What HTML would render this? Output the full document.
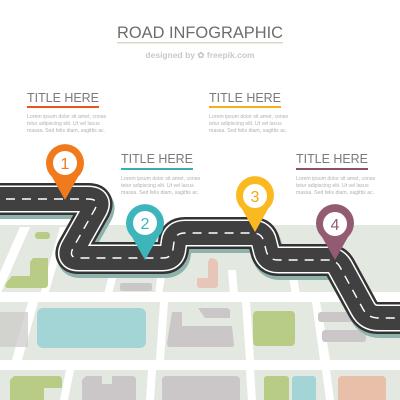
<!DOCTYPE html>
<html><head><meta charset="utf-8"><style>
html,body{margin:0;padding:0;background:#fff;}
svg{display:block;}
text{font-family:"Liberation Sans",sans-serif;}
</style></head><body>
<svg width="400" height="400" viewBox="0 0 400 400" xmlns="http://www.w3.org/2000/svg">
<rect width="400" height="400" fill="#fff"/>
<g>
<rect x="0" y="225" width="400" height="70" fill="#e3e9e1"/>
<rect x="0" y="292" width="400" height="10" fill="#fff"/>
<path d="M20 227 L30 227 L0 295 L-10 295Z" fill="#fff"/>
<path d="M60 227 L68 227 L48 295 L40 295Z" fill="#fff"/>
<path d="M110 270 L118 270 L112 295 L104 295Z" fill="#fff"/>
<path d="M158 270 L166 270 L162 295 L155 295Z" fill="#fff"/>
<path d="M228 270 L236 270 L238 295 L230 295Z" fill="#fff"/>
<path d="M288 270 L296 270 L300 295 L292 295Z" fill="#fff"/>
<path d="M350 270 L358 270 L366 295 L358 295Z" fill="#fff"/>
<rect x="35" y="232" width="15" height="7" rx="3" fill="#b9cc86"/>
<path d="M33 258 L48 258 L48 284 Q48 288 44 288 L8 288 Q4 288 6 283 L12 276 L30 276 L30 262Z" fill="#b9cc86"/>
<rect x="120" y="283" width="32" height="8" rx="2" fill="#cbc7c8"/>
<path d="M210 258 Q218 258 218 264 L218 285 Q218 288 214 288 L200 288 Q197 288 197 284 L197 278 L208 278 L208 262Z" fill="#e8c5b9"/>
<rect x="0" y="302" width="400" height="58" fill="#e3e9e1"/>
<path d="M28 302 L38 302 L22 360 L12 360Z" fill="#fff"/>
<path d="M160 302 L168 302 L164 360 L156 360Z" fill="#fff"/>
<path d="M242 302 L250 302 L254 360 L246 360Z" fill="#fff"/>
<path d="M312 302 L320 302 L330 360 L320 360Z" fill="#fff"/>
<rect x="0" y="312" width="28" height="35" fill="#cbc7c8" opacity="0.7"/>
<rect x="37" y="308" width="109" height="40" rx="6" fill="#a3d5d7"/>
<path d="M172 312 L182 312 L182 326 L232 326 L234 345 Q234 347 231 347 L170 347 Q167 347 167 343Z" fill="#cbc7c8"/>
<path d="M198 308 L226 308 Q230 308 230 312 L230 318 L205 318Z" fill="#cbc7c8"/>
<rect x="253" y="311" width="42" height="35" rx="4" fill="#b9cc86"/>
<rect x="318" y="312" width="40" height="10" rx="3" fill="#cbc7c8"/>
<rect x="322" y="330" width="44" height="12" rx="3" fill="#cbc7c8"/>
<rect x="0" y="360" width="400" height="10" fill="#fff"/>
<rect x="0" y="370" width="400" height="30" fill="#e3e9e1"/>
<path d="M66 370 L74 370 L68 400 L60 400Z" fill="#fff"/>
<path d="M148 370 L156 370 L154 400 L146 400Z" fill="#fff"/>
<path d="M246 370 L254 370 L256 400 L248 400Z" fill="#fff"/>
<path d="M322 370 L330 370 L334 400 L326 400Z" fill="#fff"/>
<path d="M14 376 L58 376 Q62 376 62 380 L62 388 L44 388 L44 400 L10 400 L10 380Z" fill="#b9cc86"/>
<path d="M86 376 L102 376 L102 384 L112 384 L112 376 L132 376 Q136 376 136 380 L136 400 L82 400 L82 380Z" fill="#cbc7c8"/>
<rect x="162" y="376" width="78" height="30" rx="4" fill="#cbc7c8"/>
<rect x="264" y="376" width="25" height="30" rx="3" fill="#b9cc86"/>
<rect x="292" y="376" width="24" height="30" rx="3" fill="#a3d5d7"/>
<rect x="338" y="376" width="48" height="30" rx="4" fill="#e8bfa8"/>
</g>
<g fill="none" stroke-linejoin="round" stroke-linecap="butt">
<path d="M-10 199 L88 199 Q100 199 95 209 L73 248 Q68 258 79 258 L163 258 Q172 258 173 249 L174 242 Q175 233 185 233 L253 233 Q262 233 264 242 L266 250 Q268 260 278 260 L328 260 Q336 260 340 267 L363 309 Q368 318 378 318 L410 318" stroke="#8fb2ac" stroke-width="32" transform="translate(2,4)"/>
<path d="M-10 199 L88 199 Q100 199 95 209 L73 248 Q68 258 79 258 L163 258 Q172 258 173 249 L174 242 Q175 233 185 233 L253 233 Q262 233 264 242 L266 250 Q268 260 278 260 L328 260 Q336 260 340 267 L363 309 Q368 318 378 318 L410 318" stroke="#333" stroke-width="32"/>
<path d="M-10 199 L88 199 Q100 199 95 209 L73 248 Q68 258 79 258 L163 258 Q172 258 173 249 L174 242 Q175 233 185 233 L253 233 Q262 233 264 242 L266 250 Q268 260 278 260 L328 260 Q336 260 340 267 L363 309 Q368 318 378 318 L410 318" stroke="#fff" stroke-width="27"/>
<path d="M-10 199 L88 199 Q100 199 95 209 L73 248 Q68 258 79 258 L163 258 Q172 258 173 249 L174 242 Q175 233 185 233 L253 233 Q262 233 264 242 L266 250 Q268 260 278 260 L328 260 Q336 260 340 267 L363 309 Q368 318 378 318 L410 318" stroke="#404040" stroke-width="24"/>
<path d="M-10 199 L88 199 Q100 199 95 209 L73 248 Q68 258 79 258 L163 258 Q172 258 173 249 L174 242 Q175 233 185 233 L253 233 Q262 233 264 242 L266 250 Q268 260 278 260 L328 260 Q336 260 340 267 L363 309 Q368 318 378 318 L410 318" stroke="#fff" stroke-width="1.4" stroke-dasharray="9 7"/>
</g>
<g>
<path d="M65 200 L52 177 A19 19 0 1 1 78 177 Z" fill="#f07a1c"/>
<circle cx="65" cy="163" r="12" fill="#fff"/>
<text x="65" y="169" font-size="16" text-anchor="middle" fill="#f07a1c">1</text>
<path d="M145 260 L132 237 A19 19 0 1 1 158 237 Z" fill="#3db6bb"/>
<circle cx="145" cy="223" r="12" fill="#fff"/>
<text x="145" y="229" font-size="16" text-anchor="middle" fill="#3db6bb">2</text>
<path d="M255 232 L242 209 A19 19 0 1 1 268 209 Z" fill="#fbb921"/>
<circle cx="255" cy="196" r="12" fill="#fff"/>
<text x="255" y="202" font-size="16" text-anchor="middle" fill="#f3a711">3</text>
<path d="M335 260 L322 237 A19 19 0 1 1 348 237 Z" fill="#935b72"/>
<circle cx="335" cy="224" r="12" fill="#fff"/>
<text x="335" y="230" font-size="16" text-anchor="middle" fill="#935b72">4</text>
</g>
<text x="117" y="38" font-size="17" fill="#6d6d6d" textLength="166" lengthAdjust="spacingAndGlyphs">ROAD INFOGRAPHIC</text>
<rect x="117" y="42" width="166" height="1.5" fill="#d8dcc6"/>
<text x="200" y="58" font-size="8.5" text-anchor="middle" fill="#c8c8c8" font-weight="bold">designed by ✿ freepik.com</text>
<g font-size="12.5" fill="#7a7a7a">
<text x="27" y="102" textLength="72" lengthAdjust="spacingAndGlyphs">TITLE HERE</text>
<text x="209" y="102" textLength="72" lengthAdjust="spacingAndGlyphs">TITLE HERE</text>
<text x="121" y="163" textLength="72" lengthAdjust="spacingAndGlyphs">TITLE HERE</text>
<text x="296" y="163" textLength="72" lengthAdjust="spacingAndGlyphs">TITLE HERE</text>
</g>
<rect x="27" y="106" width="72" height="2" fill="#e8561f"/>
<rect x="209" y="106" width="72" height="2" fill="#f5ad22"/>
<rect x="121" y="168" width="72" height="2" fill="#3aaeae"/>
<rect x="296" y="168" width="72" height="2" fill="#8e5067"/>
<g font-size="5.2" fill="#b0b0b0">
<text x="27" y="118">Lorem ipsum dolor sit amet, conse</text>
<text x="27" y="125">tetur adipiscing elit. Ut vel lacus</text>
<text x="27" y="132">massa. Sed felis diam, sagittis ac.</text>
<text x="209" y="118">Lorem ipsum dolor sit amet, conse</text>
<text x="209" y="125">tetur adipiscing elit. Ut vel lacus</text>
<text x="209" y="132">massa. Sed felis diam, sagittis ac.</text>
<text x="121" y="180">Lorem ipsum dolor sit amet, conse</text>
<text x="121" y="187">tetur adipiscing elit. Ut vel lacus</text>
<text x="121" y="194">massa. Sed felis diam, sagittis ac.</text>
<text x="296" y="180">Lorem ipsum dolor sit amet, conse</text>
<text x="296" y="187">tetur adipiscing elit. Ut vel lacus</text>
<text x="296" y="194">massa. Sed felis diam, sagittis ac.</text>
</g>
</svg>
</body></html>
